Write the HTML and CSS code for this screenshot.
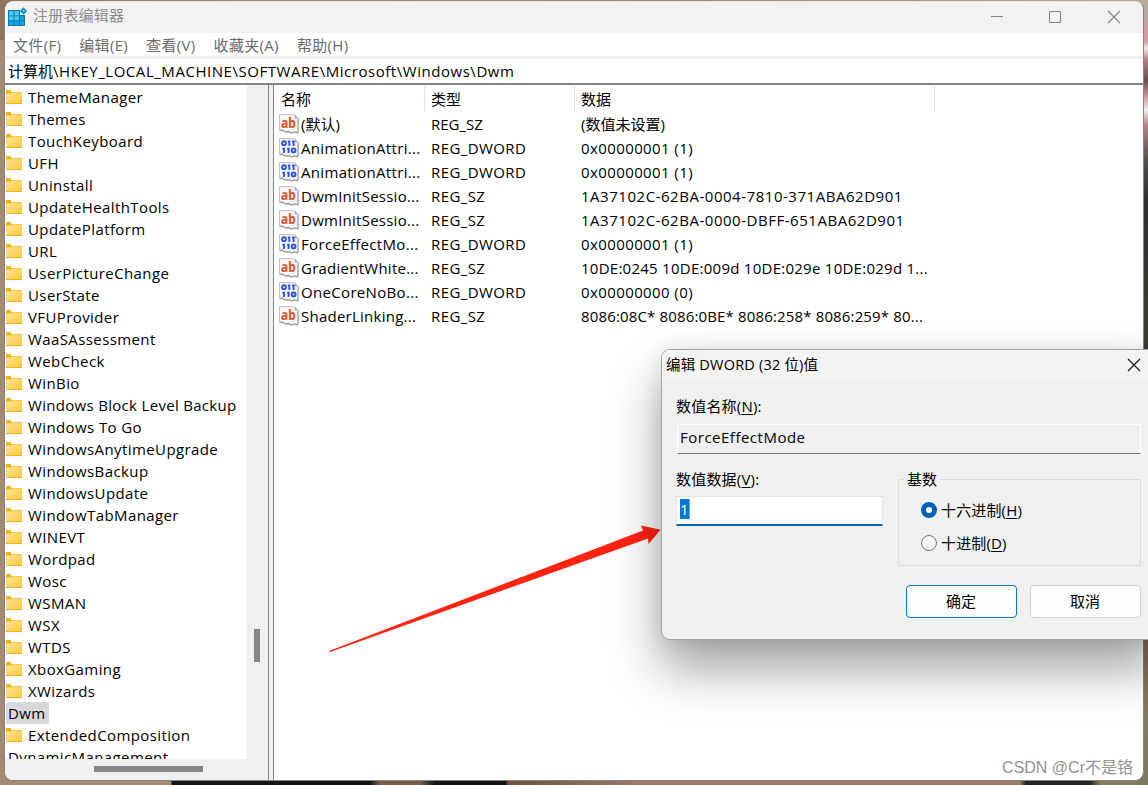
FILE: index.html
```html
<!DOCTYPE html>
<html lang="zh-CN">
<head>
<meta charset="utf-8">
<title>注册表编辑器</title>
<link rel="stylesheet" href="styles.css">
</head>
<body>
<svg class="defs" width="0" height="0">
  <defs>
    <linearGradient id="gold" x1="0" y1="0" x2="1" y2="1"><stop offset="0" stop-color="#ffe391"/><stop offset="1" stop-color="#ffc83d"/></linearGradient>
    <symbol id="folder" viewBox="0 0 16 15"><path d="M0 0h4.2l1.600 2H16v4H0z" fill="#f5b21b"/><path d="M0 3.600h4.500L6 2.600h10V14H0z" fill="url(#gold)"/><path d="M0 13.200h16v.9H0z" fill="#e9a820"/></symbol>
    <symbol id="sheet" viewBox="0 0 20 20"><path d="M.5.5h15l4 4V19l-4-.8-3 1-3-1.500-4-.2-2-1.500H.5z" fill="#f5f5f6" stroke="#c4c6c8"/><path d="M15.500.5v4h4z" fill="#aeb0b3"/><path d="M.5 16.500l3-.3 2 1.500 4-.2 3 1.500 3-1 3.500.8" fill="none" stroke="#a3a5a8" stroke-width="1.400"/><path d="M18.900 5v13" stroke="#a8aaac" stroke-width="1.200"/></symbol>
    <symbol id="sz" viewBox="0 0 20 20"><use href="#sheet"/><text x="2" y="13.500" class="glyph-ab" textLength="15" lengthAdjust="spacingAndGlyphs">ab</text></symbol>
    <symbol id="dw" viewBox="0 0 20 20"><use href="#sheet"/><g fill="none" stroke="#2f50d8" stroke-width="1.900"><ellipse cx="5" cy="5.200" rx="1.900" ry="1.900"/><path d="M10.300 2.500v5.400M14.600 2.500v5.400M8.700 3.400h1.600M13 3.400h1.600M5 9.700v5.400M9.600 9.700v5.400M3.400 10.600H5M8 10.600h1.600"/><ellipse cx="14.600" cy="12.400" rx="1.900" ry="1.900"/></g></symbol>
  </defs>
</svg>
<div class="window">
  <header class="titlebar">
    <svg class="app-icon" width="20" height="20" viewBox="0 0 20 20"><path d="M0 3h12v5h5v11H0z" fill="#0b76ad"/><g fill="#45c8f4"><path d="M1 4h4.500v4.500H1zM6.500 4H11v4.500H6.500zM1 9.300h4.500v4H1zM6.500 9.300H11v4H6.500z"/></g><g fill="#16a5e3"><path d="M12 9.300h4v4h-4zM1 14.200h4.500V18H1zM6.500 14.200H11V18H6.500zM12 14.200h4V18h-4z"/></g><path d="M15.500.2L19.200 4l-3.700 3.700L11.800 4z" fill="#168fc9"/><path d="M15.500 2.500L17 4l-1.500 1.500L14 4z" fill="#58d0f7"/></svg>
    <span class="app-title">注册表编辑器</span>
    <svg class="controls" width="140" height="20" viewBox="0 0 140 20" fill="none" stroke="#858585" stroke-width="1.100"><path d="M0 10.500h12M117 5l12 12M129 5l-12 12"/><rect x="58.500" y="5.500" width="11" height="11" rx="1"/></svg>
  </header>
  <nav class="menu"><span>文件(F)</span><span>编辑(E)</span><span>查看(V)</span><span>收藏夹(A)</span><span>帮助(H)</span></nav>
  <div class="address">计算机<span class="path">\HKEY_LOCAL_MACHINE\SOFTWARE\Microsoft\Windows\Dwm</span></div>
  <main class="panes">
    <aside class="tree">
      <ul class="keys" id="keys"></ul>
      <div class="vbar"><i></i></div>
      <div class="hbar"><i></i></div>
    </aside>
    <div class="splitter"></div>
    <section class="values" id="values">
      <div class="row head"><span>名称</span><span>类型</span><span>数据</span></div>
    </section>
  </main>
</div>
<svg class="arrow" width="340" height="140" viewBox="325 515 340 140"><path d="M329 651L643 530.500L641 525.500L660.500 529.800L648.500 544L648 538.500L330 652z" fill="#ff2312"/></svg>
<section class="dialog">
  <header class="dlg-title"><span>编辑 DWORD (32 位)值</span><svg width="14" height="14" viewBox="0 0 14 14"><path d="M1 1l12 12M13 1L1 13" stroke="#1b1b1b" stroke-width="1.200"/></svg></header>
  <div class="dlg-body">
    <label class="lbl">数值名称(<u>N</u>):</label>
    <div class="name-box">ForceEffectMode</div>
    <div class="split">
      <div class="data">
        <label class="lbl">数值数据(<u>V</u>):</label>
        <div class="data-box"><span>1</span></div>
      </div>
      <fieldset class="base">
        <legend>基数</legend>
        <label><i class="radio on"></i>十六进制(<u>H</u>)</label>
        <label><i class="radio"></i>十进制(<u>D</u>)</label>
      </fieldset>
    </div>
    <div class="buttons"><button class="btn primary">确定</button><button class="btn">取消</button></div>
  </div>
</section>
<div class="mark">CSDN @Cr不是铬</div>
<script src="app.js"></script>
</body>
</html>
```
FILE: styles.css
```css
* { box-sizing: border-box; }
body { margin: 0; width: 1148px; height: 785px; overflow: hidden; position: relative; padding: 1px 4px 4px 4px; color: #000; font: 15px/22px "Open Sans", "Noto Sans CJK SC", sans-serif;
  background: linear-gradient(90deg, #a38b72 0, #a38b72 171px, #16140f 172px, #16140f 370px, #75604e 380px, #75604e 420px, #16140f 435px, #16140f 506px, #6b5245 508px, #9b7b69 640px, #9b7b69 1020px, #25251f 1026px, #25251f 1090px, #847d60 1100px); }
body::before { content: ""; position: absolute; z-index: -1; left: 0; top: 0; width: 100%; height: 40px; background: linear-gradient(90deg, #8d735c 0, #a28a76 300px, #9c8c80 700px, #b7aa9a 1148px); }
body::after { content: ""; position: absolute; z-index: -1; right: 0; top: 0; width: 12px; height: 785px; background: linear-gradient(#b7aa9a 0, #b9a99a 18px, #d69b9b 30px, #d4a0a0 42px, #eee 48px, #b97f7f 60px, #66504e 80px, #d19191 96px, #eee 110px, #b98683 125px, #55504b 160px, #2f2e29 200px, #403a34 345px, #8a6c58 640px, #857b60 720px, #7d785e); }
.defs { position: absolute; }
.glyph-ab { font: bold 14px "Noto Sans", sans-serif; fill: #d9512c; }
.window { width: 1140px; height: 780px; display: flex; flex-direction: column; background: #fff; border: 1px solid #7f858b; border-top: 1px solid #e6e3e0; border-radius: 9px; overflow: hidden; position: relative; }
.titlebar { height: 31px; background: #f2f2f2; display: flex; align-items: center; padding: 0 0 3px 3px; flex: none; }
.app-icon { margin-top: 1px; }
.app-title { margin: -2px 0 0 5px; color: #8c8c8c; flex: 1; letter-spacing: .2px; }
.controls { margin-right: 12px; }
.menu { height: 23px; display: flex; gap: 18px; padding: 1px 0 0 8px; color: #6a6a6a; flex: none; letter-spacing: .33px; }
.address { height: 29px; border-top: 3px solid #f0f0f0; border-bottom: 2px solid #7f858b; padding-left: 3px; flex: none; line-height: 25px; }
.path { letter-spacing: .54px; }
.panes { flex: 1; display: flex; min-height: 0; }
.tree { width: 263px; display: grid; grid-template: 674px 1fr / 242px 1fr; background: #f0f0f0; }
.keys { margin: 0; padding: 1px 0 0 1px; list-style: none; overflow: hidden; background: #fff; letter-spacing: .4px; }
.keys li { height: 22px; display: flex; align-items: center; gap: 6px; white-space: nowrap; }
.keys li svg { margin-top: 1px; }
.keys li.phrase { letter-spacing: .31px; }
.keys li.plain span { padding: 0 3px 0 2px; border-radius: 2px; }
.keys li.selected span { background: #d9d9d9; }
.vbar { display: flex; justify-content: center; align-items: flex-start; padding: 544px 1px 0 0; }
.vbar i { width: 6px; height: 33px; background: #868686; }
.hbar { padding: 7px 0 0 89px; }
.hbar i { display: block; width: 109px; height: 6px; background: #868686; }
.splitter { width: 6px; background: #f0f0f0; border-left: 1px solid #7f858b; border-right: 1px solid #7f858b; }
.values { flex: 1; padding-left: 1px; }
.row { height: 24px; line-height: 24px; display: grid; grid-template-columns: 150px 150px 360px; white-space: nowrap; letter-spacing: .4px; }
.row > span { padding-left: 6px; overflow: hidden; }
.row > .name { padding-left: 4px; display: flex; align-items: center; gap: 2px; letter-spacing: .33px; }
.row > .name svg { flex: none; }
.head, .row.default, .row.default > .name { letter-spacing: 0; }
.row.guid > .name, .row.chips > .name, .row.devices > .name { letter-spacing: .25px; }
.row.guid > :last-child { letter-spacing: .53px; }
.row.devices > :last-child { letter-spacing: .26px; }
.row.chips > :last-child { letter-spacing: .15px; }
.head { height: 27px; padding-top: 1px; line-height: 26px; }
.head span { border-right: 1px solid #e2e2e2; }
.arrow { position: absolute; left: 325px; top: 515px; }
.dialog { position: absolute; left: 661px; top: 349px; width: 500px; height: 291px; background: #f0f0f0; border: 1px solid #a5a5a5; border-radius: 9px; box-shadow: 0 30px 50px rgba(0,0,0,.36), 0 0 20px rgba(0,0,0,.1); overflow: hidden; }
.dlg-title { height: 31px; background: #f3f3f3; display: flex; align-items: center; justify-content: space-between; padding: 0 19px 1px 4px; font-size: 14.5px; letter-spacing: .2px; }
.dlg-body { padding: 14px 20px 0 14px; }
.lbl { display: block; letter-spacing: .2px; }
u { text-underline-offset: 2px; text-decoration-thickness: 1px; }
.name-box { margin: 7px 0 0 1px; width: 464px; height: 30px; border: 1px solid #fff; border-bottom: 1px solid #7a7a7a; padding-left: 2px; line-height: 24px; letter-spacing: .5px; }
.split { display: flex; justify-content: space-between; width: 465px; padding-top: 14px; }
.data-box { margin-top: 6px; width: 207px; height: 30px; background: #fff; border: 1px solid #e3e3e3; border-bottom: 2px solid #0067c0; padding: 2px 3px; line-height: 20px; }
.data-box span { display: block; width: 10px; height: 20px; background: #0078d7; color: #fff; border-right: 1px solid #ff8728; }
.base { margin: 0; padding: 3px 0 0 22px; width: 243px; height: 98px; border: 1px solid #dcdcdc; }
.base legend { margin-left: -17px; padding: 0 3px; }
.base label { display: flex; align-items: center; height: 33px; letter-spacing: .15px; }
.radio { width: 16px; height: 16px; border-radius: 50%; border: 1px solid #777; background: #f6f6f6; margin-right: 4px; }
.radio.on { border: 5px solid #005fb8; background: #fff; }
.buttons { display: flex; gap: 13px; padding-left: 230px; margin-top: 19px; }
.btn { width: 111px; height: 33px; flex: none; background: #fdfdfd; border: 1px solid #d0d0d0; border-radius: 4px; font: inherit; color: #000; padding: 0 1px 2px 0; }
.btn.primary { border-color: #0078d4; }
.mark { position: absolute; right: 15px; bottom: 6px; color: #929292; font: 16px/22px "Liberation Sans", "Noto Sans CJK SC", sans-serif; }
```
FILE: app.js
```js
const keys = ["ThemeManager","Themes","TouchKeyboard","UFH","Uninstall","UpdateHealthTools","UpdatePlatform","URL","UserPictureChange","UserState","VFUProvider","WaaSAssessment","WebCheck","WinBio","Windows Block Level Backup","Windows To Go","WindowsAnytimeUpgrade","WindowsBackup","WindowsUpdate","WindowTabManager","WINEVT","Wordpad","Wosc","WSMAN","WSX","WTDS","XboxGaming","XWizards","Dwm","ExtendedComposition","DynamicManagement"];
document.getElementById("keys").innerHTML = keys.map(k => {
  const plain = k === "Dwm" || k === "DynamicManagement";
  const cls = plain ? (k === "Dwm" ? "plain selected" : "plain") : (k.includes("Block") ? "phrase" : "");
  return `<li class="${cls}">${plain ? "" : '<svg width="16" height="15"><use href="#folder"/></svg>'}<span>${k}</span></li>`;
}).join("");
const rows = [
  ["sz","(默认)","(数值未设置)","default"],
  ["dw","AnimationAttri...","0x00000001 (1)",""],
  ["dw","AnimationAttri...","0x00000001 (1)",""],
  ["sz","DwmInitSessio...","1A37102C-62BA-0004-7810-371ABA62D901","guid"],
  ["sz","DwmInitSessio...","1A37102C-62BA-0000-DBFF-651ABA62D901","guid"],
  ["dw","ForceEffectMo...","0x00000001 (1)",""],
  ["sz","GradientWhite...","10DE:0245 10DE:009d 10DE:029e 10DE:029d 1...","devices"],
  ["dw","OneCoreNoBo...","0x00000000 (0)",""],
  ["sz","ShaderLinking...","8086:08C* 8086:0BE* 8086:258* 8086:259* 80...","chips"]
];
document.getElementById("values").insertAdjacentHTML("beforeend", rows.map(([t, n, d, c]) =>
  `<div class="row ${c}"><span class="name"><svg width="20" height="20"><use href="#${t}"/></svg>${n}</span><span>${t === "sz" ? "REG_SZ" : "REG_DWORD"}</span><span>${d}</span></div>`).join(""));
```
